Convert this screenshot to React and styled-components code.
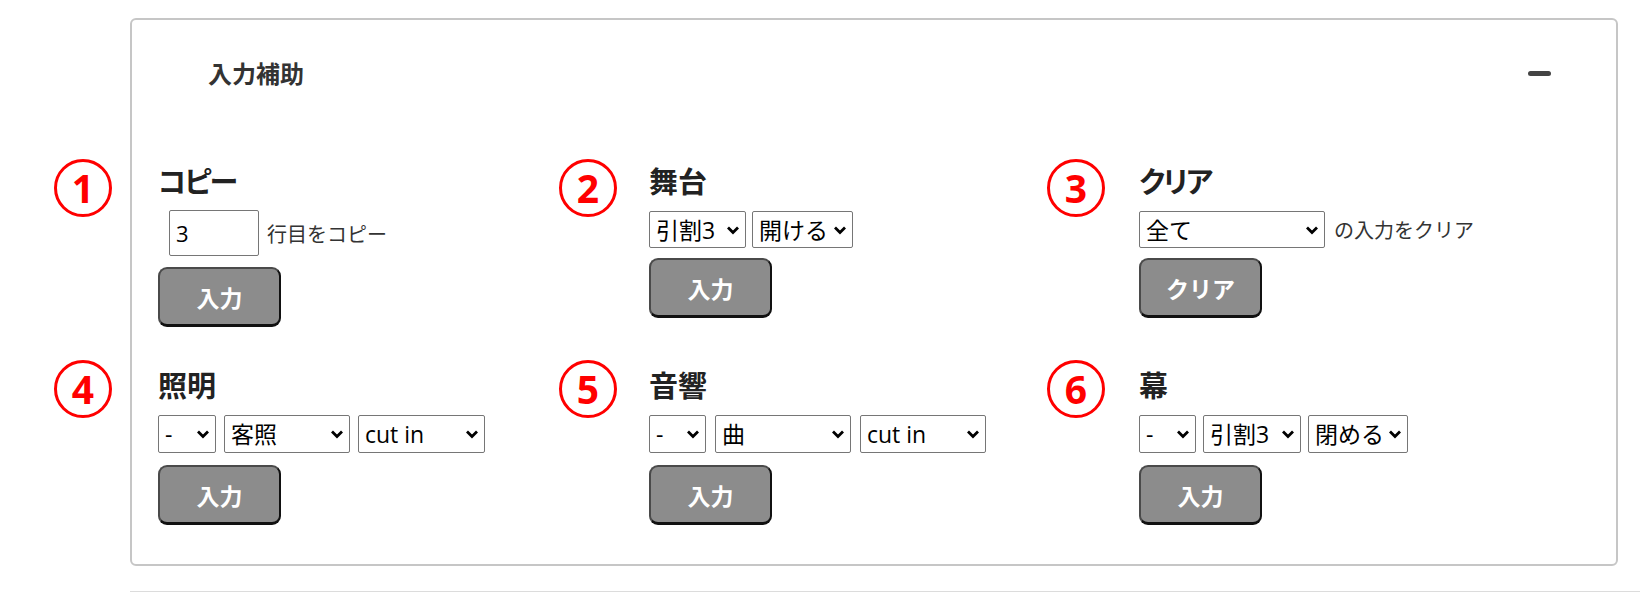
import React from 'react';
import styled, { createGlobalStyle } from 'styled-components';

const GlobalStyle = createGlobalStyle`
  body {
    margin: 0;
    background: #fff;
    font-family: "Open Sans", "Noto Sans CJK JP", sans-serif;
    color: #222;
  }
`;

const Page = styled.div`
  padding: 18px 0 0 130px;
`;

const Panel = styled.section`
  margin-right: 22px;
  border: 2px solid #c6c6c6;
  border-radius: 6px;
  padding: 36px 0 39px;
`;

const Header = styled.div`
  display: flex;
  align-items: center;
  justify-content: space-between;
  height: 34px;
  padding: 0 65px 0 76px;
`;

const Title = styled.h2`
  margin: 0;
  font-size: 24px;
  line-height: 34px;
  font-weight: 700;
  color: #333;
  font-family: "Noto Sans CJK JP", sans-serif;
`;

const Collapse = styled.span`
  display: block;
  width: 23px;
  height: 5px;
  border-radius: 3px;
  background: #444;
`;

const Grid = styled.div`
  display: grid;
  grid-template-columns: 491px 490px 1fr;
  row-gap: 40px;
  margin-top: 73px;
  padding-left: 26px;
`;

const Cell = styled.div`
  position: relative;
  display: flex;
  flex-direction: column;
  align-items: flex-start;
`;

const Badge = styled.span`
  position: absolute;
  left: ${({ $left }) => $left}px;
  top: ${({ $top }) => $top}px;
  width: 58px;
  height: 58px;
  box-sizing: border-box;
  border: 3px solid #ff0000;
  border-radius: 50%;
  display: flex;
  align-items: center;
  justify-content: center;
  padding-bottom: 2px;
  color: #ff0000;
  font-family: "Noto Sans", sans-serif;
  font-size: 39px;
  font-weight: 700;
  line-height: 1;
`;

const Heading = styled.h3`
  margin: 0;
  font-family: "Noto Sans CJK JP", sans-serif;
  font-feature-settings: "palt";
  font-size: 29px;
  line-height: 34px;
  font-weight: 700;
  letter-spacing: ${({ $tight }) => ($tight ? '-2px' : '0')};
  color: #222;
`;

const Controls = styled.div`
  display: flex;
  align-items: center;
  gap: ${({ $gap }) => $gap || 8}px;
  margin-top: ${({ $top }) => $top || 13}px;
`;

const NumberInput = styled.input`
  box-sizing: border-box;
  width: 90px;
  height: 46px;
  margin-left: 11px;
  padding: 0 6px;
  border: 1px solid #767676;
  border-radius: 2px;
  font-family: "Open Sans", sans-serif;
  font-size: 22px;
  color: #000;
`;

const SelectBox = styled.span`
  position: relative;
  display: inline-flex;
`;

const Select = styled.select`
  appearance: none;
  box-sizing: border-box;
  width: ${({ $w }) => $w}px;
  height: ${({ $h }) => $h || 37}px;
  padding: 0 22px 0 6px;
  border: 1px solid #767676;
  border-radius: 2px;
  background: #fff;
  font-family: "Open Sans", "Noto Sans CJK JP", sans-serif;
  font-size: 23px;
  color: #000;
`;

const Chevron = styled.svg`
  position: absolute;
  right: 6px;
  top: 50%;
  width: 14px;
  height: 10px;
  transform: translateY(-50%);
  pointer-events: none;
`;

const Label = styled.span`
  font-family: "Noto Sans CJK JP", sans-serif;
  font-size: 20px;
  color: #333;
`;

const Button = styled.button`
  box-sizing: border-box;
  width: 123px;
  height: 60px;
  margin-top: ${({ $top }) => $top || 11}px;
  background: #8c8c8c;
  border: 2px solid #111;
  border-bottom-width: 3px;
  border-top-color: #4a4a4a;
  border-left-color: #4a4a4a;
  border-radius: 9px;
  color: #fff;
  font-family: "Noto Sans CJK JP", sans-serif;
  font-size: 23px;
  font-weight: 700;
  cursor: pointer;
`;

const Rule = styled.hr`
  margin: 25px 0 0;
  border: 0;
  border-top: 1px solid #dcdcdc;
`;

const Dropdown = ({ w, h, items }) => (
  <SelectBox>
    <Select $w={w} $h={h}>
      {items.map((o) => (
        <option key={o}>{o}</option>
      ))}
    </Select>
    <Chevron viewBox="0 0 14 10">
      <path d="M2 2.5l5 5 5-5" fill="none" stroke="#000" strokeWidth="2.8" />
    </Chevron>
  </SelectBox>
);

const App = () => (
  <Page>
    <GlobalStyle />
    <Panel>
      <Header>
        <Title>入力補助</Title>
        <Collapse />
      </Header>
      <Grid>
        <Cell>
          <Badge $left={-104} $top={-4}>1</Badge>
          <Heading $tight>コピー</Heading>
          <Controls>
            <NumberInput type="text" defaultValue="3" />
            <Label>行目をコピー</Label>
          </Controls>
          <Button>入力</Button>
        </Cell>
        <Cell>
          <Badge $left={-90} $top={-4}>2</Badge>
          <Heading>舞台</Heading>
          <Controls $top={14} $gap={6}>
            <Dropdown w={97} items={['引割3', '引割2', '引割1']} />
            <Dropdown w={101} items={['開ける', '閉める']} />
          </Controls>
          <Button $top={10}>入力</Button>
        </Cell>
        <Cell>
          <Badge $left={-92} $top={-4}>3</Badge>
          <Heading $tight>クリア</Heading>
          <Controls $top={14} $gap={9}>
            <Dropdown w={186} items={['全て']} />
            <Label>の入力をクリア</Label>
          </Controls>
          <Button $top={10}>クリア</Button>
        </Cell>
        <Cell>
          <Badge $left={-104} $top={-7}>4</Badge>
          <Heading>照明</Heading>
          <Controls $top={14}>
            <Dropdown w={58} h={38} items={['-']} />
            <Dropdown w={126} h={38} items={['客照']} />
            <Dropdown w={127} h={38} items={['cut in', 'cut out']} />
          </Controls>
          <Button $top={12}>入力</Button>
        </Cell>
        <Cell>
          <Badge $left={-90} $top={-7}>5</Badge>
          <Heading>音響</Heading>
          <Controls $top={14} $gap={9}>
            <Dropdown w={57} h={38} items={['-']} />
            <Dropdown w={136} h={38} items={['曲']} />
            <Dropdown w={126} h={38} items={['cut in', 'cut out']} />
          </Controls>
          <Button $top={12}>入力</Button>
        </Cell>
        <Cell>
          <Badge $left={-92} $top={-7}>6</Badge>
          <Heading>幕</Heading>
          <Controls $top={14} $gap={7}>
            <Dropdown w={57} h={38} items={['-']} />
            <Dropdown w={98} h={38} items={['引割3', '引割2', '引割1']} />
            <Dropdown w={100} h={38} items={['閉める', '開ける']} />
          </Controls>
          <Button $top={12}>入力</Button>
        </Cell>
      </Grid>
    </Panel>
    <Rule />
  </Page>
);

export default App;
